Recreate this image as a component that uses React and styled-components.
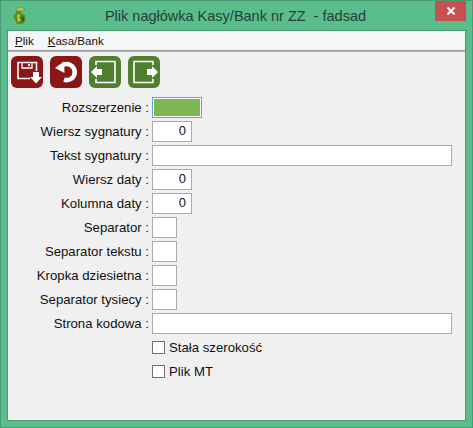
import React from "react";
import styled, { createGlobalStyle } from "styled-components";

const Global = createGlobalStyle`
  html, body { margin: 0; padding: 0; width: 473px; height: 428px; overflow: hidden; }
  body { font-family: "Liberation Sans", Arial, sans-serif; }
`;

const Win = styled.div`
  box-sizing: border-box; width: 473px; height: 428px;
  background: #5bbc8c; border: 1px solid #4a9a72;
  display: flex; flex-direction: column;
`;
const TitleBar = styled.div`
  height: 30px; flex: none; position: relative;
  display: flex; align-items: center; justify-content: center;
  font-size: 14.5px; color: #24423a; padding-right: 2px; white-space: pre;
`;
const AppIcon = styled.svg`
  position: absolute; left: 11px; top: 6px; width: 16px; height: 18px;
`;
const Close = styled.div`
  position: absolute; right: 6px; top: 0; width: 31px; height: 20px;
  background: #c75050; display: flex; align-items: center; justify-content: center;
`;
const Client = styled.div`
  flex: 1; margin: 0 7px 7px 7px; background: #f0f0f0;
  box-shadow: 0 0 0 1px #4a9a72;
  display: flex; flex-direction: column; min-height: 0;
`;
const MenuBar = styled.div`
  height: 19px; background: #f5f6f7; display: flex; gap: 14px;
  padding-left: 7px; align-items: center; font-size: 11.6px; color: #111;
  border-bottom: 2px solid #a9a9a9; box-shadow: inset 0 -1px 0 #e8e8e8;
`;
const MenuItem = styled.span`
  u { text-underline-offset: 1px; }
`;
const Toolbar = styled.div`
  display: flex; gap: 7px; padding: 4px 0 0 3px; height: 36px; flex: none;
`;
const ToolButton = styled.div`
  width: 32px; height: 32px; border-radius: 6px;
  background: ${p => (p.$green ? "#507f30" : "#8c1517")};
  display: flex; align-items: center; justify-content: center;
`;
const Form = styled.div`
  display: flex; flex-direction: column; padding-top: 5px;
`;
const Row = styled.div`
  display: grid; grid-template-columns: 144px 1fr; height: 24px; align-items: start;
`;
const Label = styled.div`
  font-size: 13.2px; color: #111; text-align: right; padding-top: 3px;
  line-height: 16px; white-space: nowrap; padding-right: 3px;
`;
const Field = styled.div`
  box-sizing: border-box; height: 21px; background: #fff;
  border: 1px solid #ababab; width: ${p => p.$w}px;
  font-size: 13px; color: #1a0a1a; text-align: right; padding: 1px 5px 0 0; line-height: 15px;
`;
const ActiveField = styled(Field)`
  border-color: #5ea6e0; background: #7db855; box-shadow: inset 0 0 0 1px #fff;
`;
const CheckRow = styled.div`
  display: flex; align-items: flex-start; height: 24px; gap: 4px; padding: 4px 0 0 144px;
  box-sizing: border-box; font-size: 13.2px; line-height: 13px; color: #111;
`;
const Box = styled.span`
  box-sizing: border-box; width: 13px; height: 13px; background: #fff; border: 1px solid #707070;
`;

const white = { fill: "none", stroke: "#fff", strokeWidth: 1.6 };

const fields = [
  ["Wiersz sygnatury :", 40, "0"],
  ["Tekst sygnatury :", 300, ""],
  ["Wiersz daty :", 40, "0"],
  ["Kolumna daty :", 40, "0"],
  ["Separator :", 25, ""],
  ["Separator tekstu :", 25, ""],
  ["Kropka dziesietna :", 25, ""],
  ["Separator tysiecy :", 25, ""],
  ["Strona kodowa :", 300, ""],
];

export default function App() {
  return (
    <Win>
      <Global />
      <TitleBar>
        <AppIcon viewBox="0 0 16 18">
          <path d="M5 1 L11 0.500 L13 3 L8 4 L9 6 L13 8 L13.500 13 L11 17 L5 17 L3 13 L1 9 L4 6 Z" fill="#5f8a1e" />
          <path d="M5 1.500 L11 1 L12 3 L7 3.500 L5 4 Z" fill="#d8c93a" />
          <path d="M5 8 L8 7 L7 11 L9 13 L6 15 Z" fill="#c8d040" />
          <path d="M9 10 L12 9.500 L12 14 L9.500 15 Z" fill="#2f6a1a" />
        </AppIcon>
        {"Plik nagłówka Kasy/Bank nr ZZ  - fadsad"}
        <Close>
          <svg width="10" height="8" viewBox="0 0 10 8">
            <path d="M1.500 .5 L8.500 7.500 M8.500 .5 L1.500 7.500" stroke="#fff" strokeWidth="2" />
          </svg>
        </Close>
      </TitleBar>
      <Client>
        <MenuBar>
          <MenuItem><u>P</u>lik</MenuItem>
          <MenuItem><u>K</u>asa/Bank</MenuItem>
        </MenuBar>
        <Toolbar>
          <ToolButton>
            <svg width="32" height="32" viewBox="0 0 32 32">
              <path d="M19 22.500 H7 V6.500 H25.500 V15" {...white} />
              <path d="M11 6.500 V12 H21 V6.500" {...white} strokeWidth="1.3" />
              <rect x="17" y="8" width="2" height="2" fill="#fff" />
              <path d="M22 16 H28 V21 H31 L25 27.500 L19 21 H22 Z" fill="#fff" />
            </svg>
          </ToolButton>
          <ToolButton>
            <svg width="32" height="32" viewBox="0 0 32 32">
              <path d="M13 9 A8 8 0 1 1 14 23.600" fill="none" stroke="#fff" strokeWidth="4.500" />
              <path d="M5 12 L14 5.500 L14.500 17 Z" fill="#fff" />
            </svg>
          </ToolButton>
          <ToolButton $green>
            <svg width="32" height="32" viewBox="0 0 32 32">
              <path d="M7 9 V5.500 H26 V26.500 H7 V23" {...white} />
              <path d="M8 10 V13 H13 V19 H8 V22 L2 16 Z" fill="#fff" />
            </svg>
          </ToolButton>
          <ToolButton $green>
            <svg width="32" height="32" viewBox="0 0 32 32">
              <path d="M25 9 V5.500 H6 V26.500 H25 V23" {...white} />
              <path d="M24 10 V13 H19 V19 H24 V22 L30 16 Z" fill="#fff" />
            </svg>
          </ToolButton>
        </Toolbar>
        <Form>
          <Row>
            <Label>Rozszerzenie :</Label>
            <ActiveField $w={50} />
          </Row>
          {fields.map(([label, w, value]) => (
            <Row key={label}>
              <Label>{label}</Label>
              <Field $w={w}>{value}</Field>
            </Row>
          ))}
          <CheckRow><Box />Stała szerokość</CheckRow>
          <CheckRow><Box />Plik MT</CheckRow>
        </Form>
      </Client>
    </Win>
  );
}
